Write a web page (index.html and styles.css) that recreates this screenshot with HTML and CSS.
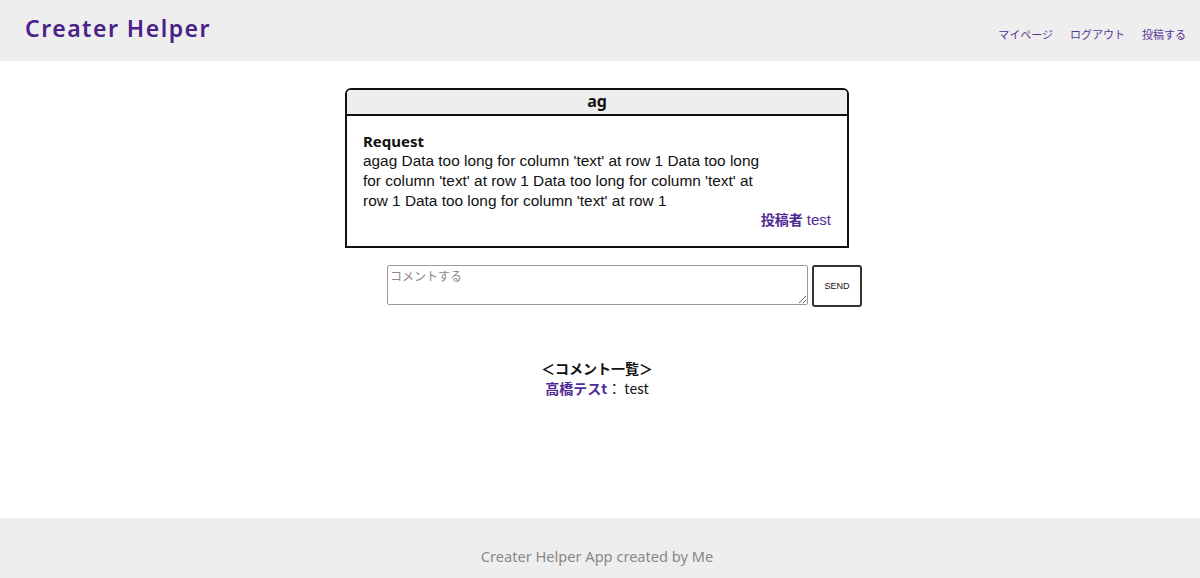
FILE: index.html
```html
<!DOCTYPE html>
<html lang="ja">
<head>
<meta charset="utf-8">
<title>Creater Helper</title>
<link rel="stylesheet" href="styles.css">
</head>
<body>
<header class="site-header">
  <h1 class="logo">Creater Helper</h1>
  <nav class="nav">
    <a href="#">マイページ</a>
    <a href="#">ログアウト</a>
    <a href="#">投稿する</a>
  </nav>
</header>
<main class="main">
  <section class="card">
    <div class="card-title">ag</div>
    <div class="card-body">
      <div class="card-label">Request</div>
      <p class="card-text">agag Data too long for column 'text' at row 1 Data too long for column 'text' at row 1 Data too long for column 'text' at row 1 Data too long for column 'text' at row 1</p>
      <div class="card-author"><b>投稿者</b> test</div>
    </div>
  </section>
  <form class="comment-form">
    <textarea class="comment-input" placeholder="コメントする"></textarea>
    <button type="button" class="send-btn">SEND</button>
  </form>
  <section class="comments">
    <div class="comments-title">＜コメント一覧＞</div>
    <div class="comment"><span class="comment-user">高橋テスt</span>： test</div>
  </section>
</main>
<footer class="site-footer">Creater Helper App created by Me</footer>
</body>
</html>
```

FILE: styles.css
```css
html, body {
  margin: 0;
  padding: 0;
}
body {
  font-family: "Noto Sans", "Noto Sans CJK JP", sans-serif;
  color: #111;
  background: #fff;
  height: 578px;
  display: flex;
  flex-direction: column;
}
.site-header {
  height: 61px;
  background: #eeeeee;
  display: flex;
  align-items: center;
  justify-content: space-between;
  padding: 0 14px 0 25px;
  flex: none;
}
.logo {
  margin: 0 0 5px 0;
  font-size: 23px;
  font-weight: 600;
  letter-spacing: 1.5px;
  color: #4a2189;
}
.nav {
  display: flex;
  gap: 17px;
  padding-top: 6px;
}
.nav a {
  font-family: "Noto Sans CJK JP", sans-serif;
  font-size: 11px;
  color: #5a3596;
  text-decoration: none;
}
.main {
  flex: 1;
  padding: 27px 6px 0 0;
  display: flex;
  flex-direction: column;
  align-items: center;
}
.card {
  width: 504px;
  border: 2px solid #111;
  border-radius: 6px 6px 0 0;
  box-sizing: border-box;
}
.card-title {
  background: #eeeeee;
  border-bottom: 2px solid #111;
  border-radius: 4px 4px 0 0;
  text-align: center;
  font-weight: 700;
  font-size: 16px;
  line-height: 23px;
  height: 24px;
}
.card-body {
  padding: 15px 16px 16px 16px;
  font-family: "Liberation Sans", "Noto Sans CJK JP", sans-serif;
}
.card-label {
  font-family: "Noto Sans", sans-serif;
  font-weight: 700;
  font-size: 15px;
  line-height: 20px;
}
.card-text {
  margin: 0;
  font-size: 15.4px;
  line-height: 20px;
  width: 414px;
}
.card-author {
  text-align: right;
  font-size: 15px;
  line-height: 20px;
  margin-top: -2px;
  color: #4f2a94;
}
.card-author b {
  font-family: "Noto Sans CJK JP", sans-serif;
  font-size: 14px;
}
.comment-form {
  display: flex;
  align-items: flex-start;
  gap: 4px;
  margin: 17px 0 0 55px;
}
.comment-input {
  width: 421px;
  height: 40px;
  box-sizing: border-box;
  border: 1px solid #9a9a9a;
  border-radius: 2px;
  padding: 1px 2px;
  font-family: "Noto Sans CJK JP", sans-serif;
  font-size: 12px;
  resize: vertical;
  margin: 0;
}
.comment-input::placeholder {
  color: #8a8a8a;
}
.send-btn {
  width: 50px;
  height: 42px;
  background: #fff;
  border: 2px solid #333;
  border-radius: 3px;
  font-family: "Liberation Sans", sans-serif;
  font-size: 9px;
  color: #111;
  padding: 0;
}
.comments {
  margin-top: 51px;
  text-align: center;
  font-size: 14px;
  line-height: 20px;
  font-family: "Noto Sans CJK JP", sans-serif;
}
.comments-title {
  font-weight: 700;
}
.comment-user {
  color: #4f2a94;
  font-weight: 700;
}
.site-footer {
  height: 60px;
  flex: none;
  background: #eeeeee;
  color: #888;
  font-size: 14.6px;
  display: flex;
  align-items: center;
  justify-content: center;
  padding: 16px 6px 0 0;
  box-sizing: border-box;
}
```
